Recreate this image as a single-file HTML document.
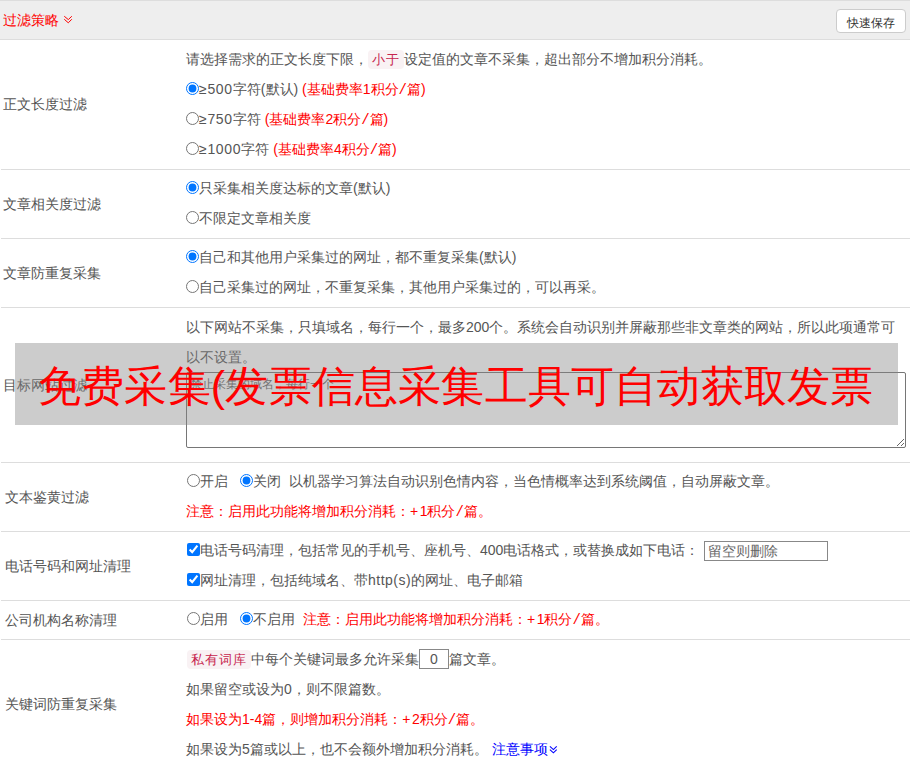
<!DOCTYPE html>
<html><head><meta charset="utf-8">
<style>
.sl{font-family:"Liberation Mono",monospace}.pl{letter-spacing:1.5px}.lat{letter-spacing:.5px}
*{box-sizing:border-box}
html,body{margin:0;padding:0;background:#fff}
body{width:912px;height:768px;overflow:hidden;position:relative;font-family:"Liberation Sans",sans-serif;font-size:14px;color:#555}
.hd{position:absolute;left:0;top:0;width:910px;height:40px;background:#eee;border-top:1px solid #ddd;border-bottom:1px solid #ddd}
.ttl{position:absolute;left:3px;top:5px;line-height:30px;color:#f00;white-space:nowrap}
.chv{position:absolute}
.btn{position:absolute;left:836px;top:9px;width:70px;height:24px;background:#fff;border:1px solid #ccc;border-radius:4px;font-size:12px;color:#333;line-height:27px;padding-left:0;text-align:center}
.bd{position:absolute;left:1px;width:909px;height:1px;background:#ddd}
.lb{position:absolute;left:3px;line-height:30px;white-space:nowrap}
.ln{position:absolute;left:186px;line-height:30px;height:30px;white-space:nowrap}
.r{color:#f00}
.bl{color:#00f}
code{font-family:"Liberation Sans",sans-serif;font-size:13px;color:#c7254e;background:#f9f2f4;border-radius:4px;padding:2px 4px;letter-spacing:1px}
input[type=radio],input[type=checkbox]{margin:0;width:13px;height:13px;vertical-align:-1px}
.ge{letter-spacing:0.7px}
.ov{position:absolute;left:15px;top:343px;width:883px;height:82px;background:rgba(134,134,134,0.42)}
.ovt{position:absolute;left:38px;top:356px;font-size:43px;letter-spacing:0.2px;line-height:60px;color:#f00;white-space:nowrap}
textarea{position:absolute;left:186px;top:372px;width:720px;height:76px;margin:0;border:1px solid #767676;border-radius:2px;background:#fff;font-family:"Liberation Sans",sans-serif;font-size:12px;line-height:18px;padding:2px 3px;resize:both}
textarea::placeholder{color:#666}
input[type=text]{margin:0;border:1px solid #888;border-radius:0;background:#fff;height:20px;vertical-align:top;font-family:"Liberation Sans",sans-serif;font-size:14px;color:#555;padding:0 3px;outline:none}
input[type=text]::placeholder{color:#666}
</style></head><body>
<div class="hd"></div>
<div class="ttl">过滤策略</div>
<svg class="chv" style="left:63px;top:15px" width="10" height="9" viewBox="0 0 10 9"><path d="M1.25 1.25L5.3 4.6L8.8 1.25M1.25 4.25L5.3 7.8L8.8 4.25" fill="none" stroke="#f00" stroke-width="1"/></svg>
<div class="btn">快速保存</div>

<div class="lb" style="top:89px">正文长度过滤</div>
<div class="ln" style="top:44px">请选择需求的正文长度下限，<code>小于</code>设定值的文章不采集，超出部分不增加积分消耗。</div>
<div class="ln" style="top:74px"><input type="radio" checked><span class="ge">≥500</span>字符(默认) <span class="r">(基础费率1积分<span class="sl">/</span>篇)</span></div>
<div class="ln" style="top:104px"><input type="radio"><span class="ge">≥750</span>字符 <span class="r">(基础费率2积分<span class="sl">/</span>篇)</span></div>
<div class="ln" style="top:134px"><input type="radio"><span class="ge">≥1000</span>字符 <span class="r">(基础费率4积分<span class="sl">/</span>篇)</span></div>
<div class="bd" style="top:169px"></div>

<div class="lb" style="top:189px">文章相关度过滤</div>
<div class="ln" style="top:173px"><input type="radio" checked>只采集相关度达标的文章(默认)</div>
<div class="ln" style="top:203px"><input type="radio">不限定文章相关度</div>
<div class="bd" style="top:238px"></div>

<div class="lb" style="top:258px">文章防重复采集</div>
<div class="ln" style="top:242px"><input type="radio" checked>自己和其他用户采集过的网址，都不重复采集(默认)</div>
<div class="ln" style="top:272px"><input type="radio">自己采集过的网址，不重复采集，其他用户采集过的，可以再采。</div>
<div class="bd" style="top:307px"></div>

<div class="lb" style="top:370px">目标网站过滤</div>
<div class="ln" style="top:312px">以下网站不采集，只填域名，每行一个，最多200个。系统会自动识别并屏蔽那些非文章类的网站，所以此项通常可</div>
<div class="ln" style="top:342px">以不设置。</div>
<textarea placeholder="禁止采集的域名，每行一个"></textarea>
<div class="bd" style="top:462px"></div>

<div class="lb" style="left:4.5px;top:482px">文本鉴黄过滤</div>
<div class="ln" style="top:466px"><input type="radio" style="margin-left:1px">开启<input type="radio" checked style="margin-left:12px">关闭 &nbsp;以机器学习算法自动识别色情内容，当色情概率达到系统阈值，自动屏蔽文章。</div>
<div class="ln r" style="top:496px">注意：启用此功能将增加积分消耗：<span class="pl">+</span>1积分<span class="sl">/</span>篇。</div>
<div class="bd" style="top:531px"></div>

<div class="lb" style="left:4.5px;top:551px">电话号码和网址清理</div>
<div class="ln" style="top:535px"><input type="checkbox" checked style="margin-left:1px">电话号码清理，包括常见的手机号、座机号、400电话格式，或替换成如下电话：<input type="text" placeholder="留空则删除" style="width:124px;margin-top:6px;margin-left:5px"></div>
<div class="ln" style="top:565px"><input type="checkbox" checked style="margin-left:1px">网址清理，包括纯域名、带<span class="lat">http(s)</span>的网址、电子邮箱</div>
<div class="bd" style="top:600px"></div>

<div class="lb" style="left:4.5px;top:605px">公司机构名称清理</div>
<div class="ln" style="top:604px"><input type="radio" style="margin-left:1px">启用<input type="radio" checked style="margin-left:12px">不启用<span class="r" style="margin-left:8px">注意：启用此功能将增加积分消耗：<span class="pl">+</span>1积分<span class="sl">/</span>篇。</span></div>
<div class="bd" style="top:639px"></div>

<div class="lb" style="left:4.5px;top:689px">关键词防重复采集</div>
<div class="ln" style="top:644px;left:187px"><code>私有词库</code>中每个关键词最多允许采集<input type="text" value="0" style="width:30px;text-align:center;margin-top:5px">篇文章。</div>
<div class="ln" style="top:674px">如果留空或设为0，则不限篇数。</div>
<div class="ln r" style="top:704px">如果设为1-4篇，则增加积分消耗：<span class="pl">+</span>2积分<span class="sl">/</span>篇。</div>
<div class="ln" style="top:734px">如果设为5篇或以上，也不会额外增加积分消耗。 <span class="bl">注意事项</span></div>
<svg class="chv" style="left:549px;top:745px" width="9" height="9" viewBox="0 0 9 9"><path d="M0.9 1.3L4.4 4.6L7.7 1.3M0.9 4.6L4.4 7.8L7.7 4.6" fill="none" stroke="#00f" stroke-width="1.1"/></svg>

<div class="ov"></div>
<div class="ovt">免费采集(发票信息采集工具可自动获取发票</div>
</body></html>
